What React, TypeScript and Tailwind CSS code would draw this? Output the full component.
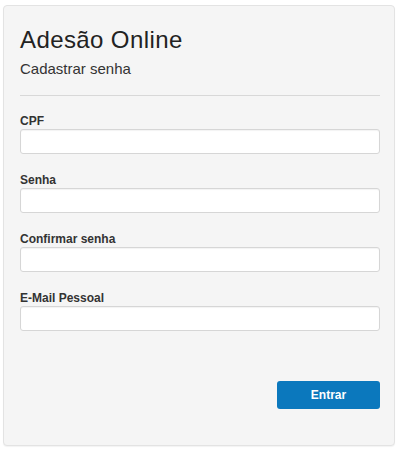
import type { ReactNode } from 'react'

function Field({ label, type = 'text' }: { label: string; type?: string }) {
  return (
    <div className="flex flex-col">
      <label className="h-[14px] text-[12px] font-bold leading-[14px] text-[#333]">
        {label}
      </label>
      <input
        type={type}
        className="mt-px h-[25px] w-full rounded-[3px] border border-[#d6d6d6] bg-white px-2 text-[13px] shadow-[inset_0_1px_1px_rgba(0,0,0,0.05)] outline-none"
      />
    </div>
  )
}

function Card({ children }: { children: ReactNode }) {
  return (
    <div className="ml-[3px] mt-[5px] flex h-[441px] w-[392px] flex-col rounded-[4px] border border-[#e3e3e3] bg-[#f5f5f5] pl-4 pr-[14px] pt-[20px] shadow-[0_1px_1px_rgba(0,0,0,0.05)]">
      {children}
    </div>
  )
}

export default function App() {
  return (
    <div className="h-[450px] w-[403px] bg-white font-['Liberation_Sans',Arial,sans-serif]">
      <Card>
        <h1 className="text-[24px] font-normal leading-[28px] tracking-[0.4px] text-[#222]">
          Adesão Online
        </h1>
        <h2 className="mt-[6px] text-[15px] font-normal leading-[18px] text-[#333]">
          Cadastrar senha
        </h2>
        <div className="mt-[17px] h-px w-full bg-[#d8d8d8]" />

        <form className="mt-[18px] flex flex-col gap-[19px]">
          <Field label="CPF" />
          <Field label="Senha" type="password" />
          <Field label="Confirmar senha" type="password" />
          <Field label="E-Mail Pessoal" type="email" />
        </form>

        <div className="mt-[50px] flex justify-end">
          <button
            type="button"
            className="h-[28px] w-[103px] rounded-[3px] bg-[#0b78bd] text-[12px] font-bold text-white"
          >
            Entrar
          </button>
        </div>
      </Card>
    </div>
  )
}
